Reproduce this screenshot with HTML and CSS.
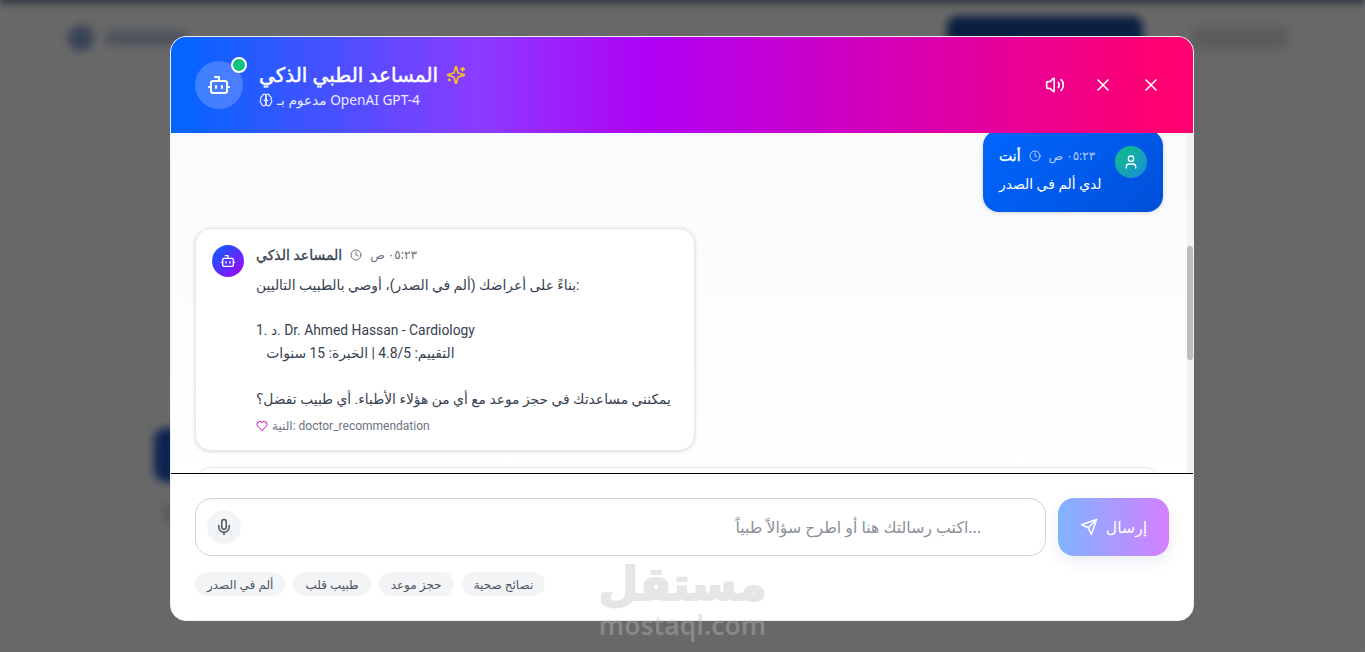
FILE: index.html
```html
<!DOCTYPE html>
<html lang="ar">
<head>
<meta charset="utf-8">
<title>المساعد الطبي الذكي</title>
<link rel="stylesheet" href="styles.css">
</head>
<body>
<div class="page" aria-hidden="true">
  <div class="page-bar"></div>
  <div class="page-head">
    <div class="page-logo"><span class="logo-dot"></span><span class="logo-text"></span></div>
    <div class="page-actions"><span class="page-cta"></span><span class="page-link"></span></div>
  </div>
  <div class="page-blob"></div>
  <div class="page-blob-gray"></div>
</div>
<div class="overlay"></div>

<div class="modal">
  <header class="m-head">
    <div class="bot-wrap">
      <div class="bot-avatar">
        <svg class="i24" viewBox="0 0 24 24"><path d="M12 8V4H8"/><rect x="4" y="8" width="16" height="12" rx="2"/><path d="M2 14h2M20 14h2M15 13v2M9 13v2"/></svg>
      </div>
      <span class="online"></span>
    </div>
    <div class="titles">
      <h1 class="title">المساعد الطبي الذكي
        <svg class="i20 spark" viewBox="0 0 24 24"><path d="M9.94 15.5A2 2 0 0 0 8.5 14.06l-6.14-1.58a.5.5 0 0 1 0-.96L8.5 9.94A2 2 0 0 0 9.94 8.5l1.58-6.14a.5.5 0 0 1 .96 0l1.58 6.14a2 2 0 0 0 1.44 1.44l6.14 1.58a.5.5 0 0 1 0 .96l-6.14 1.58a2 2 0 0 0-1.44 1.44l-1.58 6.14a.5.5 0 0 1-.96 0z"/><path d="M20 3v4M22 5h-4M4 17v2M5 18H3"/></svg>
      </h1>
      <p class="sub">
        <svg class="i14" viewBox="0 0 24 24"><path d="M12 5a3 3 0 1 0-5.997.125 4 4 0 0 0-2.526 5.77 4 4 0 0 0 .556 6.588A4 4 0 1 0 12 18z"/><path d="M12 5a3 3 0 1 1 5.997.125 4 4 0 0 1 2.526 5.77 4 4 0 0 1-.556 6.588A4 4 0 1 1 12 18z"/><path d="M15 13a4.5 4.5 0 0 1-3-4 4.5 4.5 0 0 1-3 4"/></svg>
        <span>مدعوم بـ OpenAI GPT-4</span>
      </p>
    </div>
    <div class="head-btns">
      <button class="h-btn"><svg class="i20" viewBox="0 0 24 24"><path d="M11 4.702a.705.705 0 0 0-1.203-.498L6.413 7.587A1.4 1.4 0 0 1 5.416 8H3a1 1 0 0 0-1 1v6a1 1 0 0 0 1 1h2.416a1.4 1.4 0 0 1 .997.413l3.383 3.384A.705.705 0 0 0 11 19.298z"/><path d="M16 9a5 5 0 0 1 0 6"/><path d="M19.364 18.364a9 9 0 0 0 0-12.728"/></svg></button>
      <button class="h-btn"><svg class="i20" viewBox="0 0 24 24"><path d="M18 6 6 18M6 6l12 12"/></svg></button>
      <button class="h-btn"><svg class="i20" viewBox="0 0 24 24"><path d="M18 6 6 18M6 6l12 12"/></svg></button>
    </div>
  </header>

  <section class="msgs">
    <div class="scroll-track"><span class="scroll-thumb"></span></div>
    <article class="user-msg">
      <div class="user-avatar"><svg class="i16" viewBox="0 0 24 24"><path d="M19 21v-2a4 4 0 0 0-4-4H9a4 4 0 0 0-4 4v2"/><circle cx="12" cy="7" r="4"/></svg></div>
      <div class="msg-body">
        <div class="meta meta-user">
          <strong class="who-user">أنت</strong>
          <svg class="i12 clock-user" viewBox="0 0 24 24"><circle cx="12" cy="12" r="10"/><path d="M12 6v6l4 2"/></svg>
          <span class="time-user">٠٥:٢٣ ص</span>
        </div>
        <p class="user-text">لدي ألم في الصدر</p>
      </div>
    </article>

    <article class="bot-msg">
      <div class="bot-mini"><svg class="i16" viewBox="0 0 24 24"><path d="M12 8V4H8"/><rect x="4" y="8" width="16" height="12" rx="2"/><path d="M2 14h2M20 14h2M15 13v2M9 13v2"/></svg></div>
      <div class="msg-body">
        <div class="meta meta-bot">
          <strong class="who-bot">المساعد الذكي</strong>
          <svg class="i12 clock-bot" viewBox="0 0 24 24"><circle cx="12" cy="12" r="10"/><path d="M12 6v6l4 2"/></svg>
          <span class="time-bot">٠٥:٢٣ ص</span>
        </div>
        <p class="bot-text">بناءً على أعراضك (ألم في الصدر)، أوصي بالطبيب التاليين:

1. د. Dr. Ahmed Hassan - Cardiology
   التقييم: 4.8/5 | الخبرة: 15 سنوات

يمكنني مساعدتك في حجز موعد مع أي من هؤلاء الأطباء. أي طبيب تفضل؟</p>
        <p class="intent"><svg class="i12 heart" viewBox="0 0 24 24"><path d="M19 14c1.49-1.46 3-3.21 3-5.5A5.5 5.5 0 0 0 16.5 3c-1.76 0-3 .5-4.5 2-1.5-1.5-2.74-2-4.5-2A5.5 5.5 0 0 0 2 8.5c0 2.3 1.5 4.05 3 5.5l7 7Z"/></svg><span>النية: doctor_recommendation</span></p>
      </div>
    </article>

    <article class="bot-next"></article>
  </section>

  <footer class="m-foot">
    <div class="input-row">
      <div class="input-box">
        <button class="mic"><svg class="i18" viewBox="0 0 24 24"><path d="M12 2a3 3 0 0 0-3 3v7a3 3 0 0 0 6 0V5a3 3 0 0 0-3-3Z"/><path d="M19 10v2a7 7 0 0 1-14 0v-2"/><path d="M12 19v3"/></svg></button>
        <input class="field" type="text" placeholder="اكتب رسالتك هنا أو اطرح سؤالاً طبياً...">
      </div>
      <button class="send"><svg class="i18" viewBox="0 0 24 24"><path d="m22 2-7 20-4-9-9-4Z"/><path d="M22 2 11 13"/></svg><span>إرسال</span></button>
    </div>
    <div class="chips">
      <button class="chip">ألم في الصدر</button>
      <button class="chip">طبيب قلب</button>
      <button class="chip">حجز موعد</button>
      <button class="chip">نصائح صحية</button>
    </div>
  </footer>
</div>

<div class="mark"><span class="mark-ar">مستقل</span><span class="mark-en">mostaql.com</span></div>
</body>
</html>
```
FILE: styles.css
```css
* { box-sizing: border-box; }
html, body { margin: 0; height: 100%; overflow: hidden; }
body { font-family: "Noto Sans", "DejaVu Sans", sans-serif; background: #fff; color: #1f2937; }
h1, p { margin: 0; }
button { border: 0; background: none; padding: 0; font: inherit; color: inherit; }
svg { fill: none; stroke: currentColor; stroke-width: 2; stroke-linecap: round; stroke-linejoin: round; flex: none; display: block; }
.i12 { width: 12px; height: 12px; }
.i14 { width: 14px; height: 14px; }
.i16 { width: 16px; height: 16px; }
.i18 { width: 18px; height: 18px; }
.i20 { width: 20px; height: 20px; }
.i24 { width: 24px; height: 24px; }

/* blurred page behind the dialog */
.page { position: fixed; inset: 0; background: #f7f8f8; filter: blur(4px); }
.page-bar { height: 6px; margin-top: -4px; background: #1f3a63; }
.page-head { display: flex; justify-content: space-between; align-items: center; height: 72px; padding: 0 76px 0 68px; }
.page-logo, .page-actions { display: flex; align-items: center; gap: 12px; }
.logo-dot { width: 26px; height: 26px; border-radius: 50%; background: #8b9fcc; }
.logo-text { width: 80px; height: 14px; background: #b7c3dc; border-radius: 4px; }
.page-cta { width: 196px; height: 44px; border-radius: 10px; background: #1a4a9c; }
.page-link { width: 96px; height: 24px; background: #dcdcdc; border-radius: 4px; margin-left: 38px; }
.page-blob { position: absolute; left: 154px; top: 428px; width: 60px; height: 54px; border-radius: 12px; background: #1f56c0; }
.page-blob-gray { position: absolute; left: 164px; top: 504px; width: 40px; height: 18px; background: #d4d4d4; }
.overlay { position: fixed; inset: 0; background: rgba(0, 0, 0, .58); }

/* dialog */
.modal { position: fixed; left: 170px; top: 36px; width: 1024px; height: 585px; display: flex; flex-direction: column; background: #fff; border: 1px solid #eef0f3; border-radius: 16px; overflow: hidden; }
.m-head { flex: none; height: 96px; padding: 0 24px; display: flex; align-items: center; gap: 16px; color: #fff; background: linear-gradient(90deg, #0066ff, #8b3cff 30%, #b000f5 47%, #ff0070 97%); }
.bot-wrap { position: relative; }
.bot-avatar { width: 48px; height: 48px; border-radius: 50%; background: rgba(255, 255, 255, .2); display: flex; align-items: center; justify-content: center; }
.online { position: absolute; top: -4px; right: -4px; width: 16px; height: 16px; border-radius: 50%; background: #10c27f; border: 2px solid #fff; }
.titles { flex: 1; display: flex; flex-direction: column; gap: 2px; }
.title { font-size: 20px; line-height: 28px; font-weight: 500; -webkit-text-stroke: .5px #fff; display: flex; align-items: center; gap: 8px; }
.spark { color: #fcc419; }
.sub { font-size: 13.7px; line-height: 18px; color: rgba(255, 255, 255, .9); display: flex; align-items: center; gap: 4px; }
.head-btns { display: flex; gap: 12px; }
.h-btn { width: 36px; height: 36px; display: flex; align-items: center; justify-content: center; color: #fff; }

.msgs { flex: 1; min-height: 0; position: relative; overflow: hidden; background: linear-gradient(#f9fafc, #fff); padding: 0 30px 0 24px; display: flex; flex-direction: column; gap: 16px; }
.scroll-track { position: absolute; top: 0; right: 0; bottom: 0; width: 6px; background: #f1f2f5; }
.scroll-thumb { position: absolute; top: 113px; left: 0; width: 6px; height: 114px; border-radius: 3px; background: #bcbec2; }

.user-msg { flex: none; align-self: flex-end; width: 180px; margin-top: -3px; padding: 16px; display: flex; flex-direction: row-reverse; gap: 12px; border-radius: 16px; color: #fff; background: linear-gradient(135deg, #0066ff, #0050d8); box-shadow: 0 1px 4px rgba(0, 0, 0, .15); }
.user-avatar { width: 32px; height: 32px; border-radius: 50%; background: linear-gradient(135deg, #10c27f, #1a8ae0); display: flex; align-items: center; justify-content: center; flex: none; }
.msg-body { flex: 1; min-width: 0; }
.meta { display: flex; align-items: center; gap: 8px; white-space: nowrap; }
.meta-user { height: 19px; margin-bottom: 8px; }
.meta-bot { height: 20px; margin-bottom: 9px; }
.who-user { font-size: 14px; font-weight: 500; -webkit-text-stroke: .3px #fff; }
.clock-user, .time-user { color: rgba(255, 255, 255, .7); }
.time-user, .time-bot { font-size: 12px; }
.user-text { font-size: 13.85px; line-height: 22.75px; white-space: nowrap; }

.bot-msg { flex: none; align-self: flex-start; width: 500px; padding: 16px; display: flex; gap: 12px; background: #fff; border: 1px solid #e5e7eb; border-radius: 16px; box-shadow: 0 1px 4px rgba(0, 0, 0, .14); }
.bot-mini { width: 32px; height: 32px; border-radius: 50%; background: linear-gradient(135deg, #0066ff, #aa00ff); color: #fff; display: flex; align-items: center; justify-content: center; flex: none; }
.who-bot { font-size: 14px; font-weight: 500; color: #374151; -webkit-text-stroke: .3px #374151; }
.clock-bot, .time-bot { color: #6b7280; }
.bot-text { font-family: Roboto, "Noto Sans", "DejaVu Sans", sans-serif; font-size: 13.85px; line-height: 22.75px; color: #374151; white-space: pre; }
.intent { margin-top: 8px; font-family: Roboto, "Noto Sans", "DejaVu Sans", sans-serif; font-size: 12px; line-height: 16px; color: #6b7280; display: flex; align-items: center; gap: 4px; }
.heart { color: #d000c0; }
.bot-next { flex: none; height: 60px; width: 966px; background: #fff; border: 1px solid #e5e7eb; border-radius: 16px; }

.m-foot { flex: none; height: 147px; padding: 24px 24px 0; border-top: 1px solid #000; background: #fff; }
.input-row { display: flex; gap: 12px; height: 58px; }
.input-box { flex: 1; display: flex; align-items: center; padding: 0 0 0 11px; border: 1px solid #d1d5db; border-radius: 16px; }
.mic { width: 34px; height: 34px; border-radius: 50%; background: #f3f4f6; color: #4b5563; display: flex; align-items: center; justify-content: center; flex: none; }
.field { flex: 1; min-width: 0; height: 100%; border: 0; outline: 0; background: none; font: inherit; font-size: 15.8px; text-align: right; padding: 0 64px 0 12px; }
.field::placeholder { color: #8b9099; opacity: 1; }
.send { width: 111px; display: flex; align-items: center; justify-content: center; gap: 8px; border-radius: 16px; color: #fff; font-size: 15.7px; font-weight: 500; background: linear-gradient(90deg, #80b3ff, #d480ff); box-shadow: 0 6px 14px rgba(60, 80, 160, .1); }
.chips { display: flex; gap: 8px; margin-top: 16px; }
.chip { height: 24px; padding: 0 12px; border-radius: 12px; background: #f3f4f6; color: #4b5563; font-size: 12px; }

/* watermark over the screenshot */
.mark { position: fixed; left: 600px; top: 556px; width: 165px; display: flex; flex-direction: column; align-items: center; color: #bdbdbd; opacity: .38; pointer-events: none; }
.mark-ar { font-family: "DejaVu Sans", sans-serif; font-size: 46px; line-height: 56px; font-weight: 700; -webkit-text-stroke: 2px #bdbdbd; }
.mark-en { font-family: "Noto Sans", sans-serif; font-size: 26.5px; line-height: 26px; font-weight: 600; }
```
